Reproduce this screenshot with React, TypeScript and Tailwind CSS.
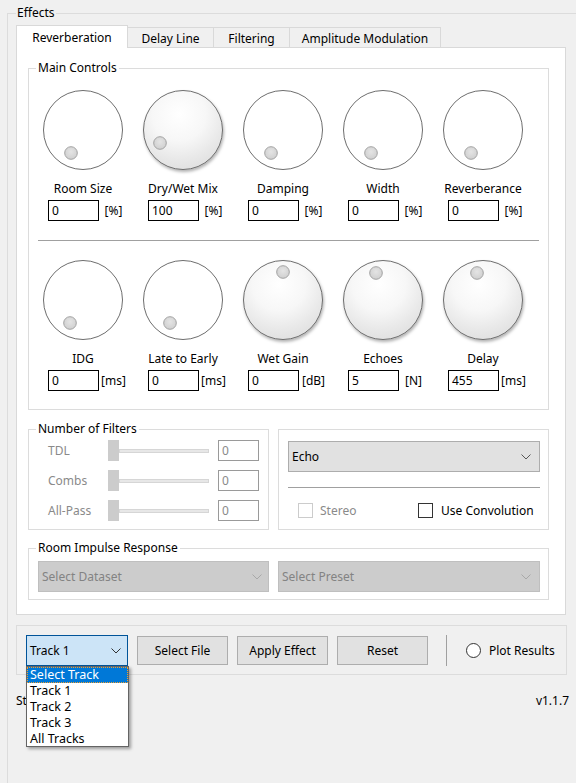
import React from "react";

type KnobProps = { filled?: boolean; dx: number; dy: number };

function Knob({ filled, dx, dy }: KnobProps) {
  return (
    <svg width="80" height="80" viewBox="0 0 80 80" overflow="visible" className="block">
      <defs>
        <radialGradient id="kg" cx="0.45" cy="0.3" r="0.75">
          <stop offset="0" stopColor="#ffffff" />
          <stop offset="0.45" stopColor="#f7f7f7" />
          <stop offset="0.75" stopColor="#e9e9e9" />
          <stop offset="0.92" stopColor="#e2e2e2" />
          <stop offset="1" stopColor="#efefef" />
        </radialGradient>
        <radialGradient id="dg" cx="0.5" cy="0.4" r="0.6">
          <stop offset="0" stopColor="#e4e4e4" />
          <stop offset="1" stopColor="#cfcfcf" />
        </radialGradient>
        <filter id="ks" x="-20%" y="-20%" width="150%" height="150%">
          <feDropShadow dx="1" dy="2" stdDeviation="1.6" floodColor="#000" floodOpacity="0.3" />
        </filter>
      </defs>
      {filled ? (
        <circle cx="40" cy="40" r="39.5" fill="url(#kg)" stroke="#6e6e6e" strokeWidth="1" filter="url(#ks)" />
      ) : (
        <circle cx="40" cy="40" r="39.5" fill="#ffffff" stroke="#6e6e6e" strokeWidth="1" />
      )}
      <circle cx={40 + dx} cy={40 + dy} r="6.3" fill="url(#dg)" stroke="#a3a3a3" strokeWidth="1" />
    </svg>
  );
}

function Chevron({ color = "#000" }: { color?: string }) {
  return (
    <svg width="10" height="6" viewBox="0 0 10 6" className="block">
      <polyline points="0.5,0.5 5,5 9.5,0.5" fill="none" stroke={color} strokeWidth="1" />
    </svg>
  );
}

type KnobCol = { label: string; value: string; unit: string; filled?: boolean; dx: number; dy: number };

function KnobColumn({ k }: { k: KnobCol }) {
  return (
    <div className="flex w-[100px] flex-col items-center">
      <Knob filled={k.filled} dx={k.dx} dy={k.dy} />
      <div className="mt-[11px] h-[16px] leading-[16px] text-black">{k.label}</div>
      <div className="mt-[3px] flex w-full items-center pl-[15px]">
        <div className="h-[21px] w-[51px] border border-black bg-white pl-[3px] pt-[1px] leading-[18px]">{k.value}</div>
        <div className="w-[29px] pt-[1px] text-center leading-[16px]">{k.unit}</div>
      </div>
    </div>
  );
}

function GroupTitle({ children }: { children: React.ReactNode }) {
  return (
    <div className="absolute left-[7px] top-[-9px] bg-inherit px-[2px] leading-[16px] text-black">{children}</div>
  );
}

const row1: KnobCol[] = [
  { label: "Room Size", value: "0", unit: "[%]", dx: -12, dy: 23 },
  { label: "Dry/Wet Mix", value: "100", unit: "[%]", filled: true, dx: -23, dy: 13 },
  { label: "Damping", value: "0", unit: "[%]", dx: -12, dy: 23 },
  { label: "Width", value: "0", unit: "[%]", dx: -12, dy: 23 },
  { label: "Reverberance", value: "0", unit: "[%]", dx: -12, dy: 23 },
];

const row2: KnobCol[] = [
  { label: "IDG", value: "0", unit: "[ms]", dx: -13, dy: 23 },
  { label: "Late to Early", value: "0", unit: "[ms]", dx: -13, dy: 23 },
  { label: "Wet Gain", value: "0", unit: "[dB]", filled: true, dx: 0, dy: -28 },
  { label: "Echoes", value: "5", unit: "[N]", filled: true, dx: -7, dy: -27 },
  { label: "Delay", value: "455", unit: "[ms]", filled: true, dx: -6, dy: -27 },
];

function SliderRow({ label }: { label: string }) {
  return (
    <div className="flex h-[21px] items-center">
      <div className="w-[60px] pt-[1px] leading-[16px] text-[#8a8a8a]">{label}</div>
      <div className="relative h-[21px] w-[101px]">
        <div className="absolute left-[11px] right-0 top-[9px] h-[4px] border border-[#d6d6d6] bg-[#e7e7e7]" />
        <div className="absolute left-0 top-0 h-[21px] w-[11px] bg-[#cccccc]" />
      </div>
      <div className="ml-[9px] h-[21px] w-[41px] border border-[#9a9a9a] bg-white pl-[3px] pt-[1px] leading-[18px] text-[#8a8a8a]">0</div>
    </div>
  );
}

export default function App() {
  return (
    <div className="relative h-[783px] w-[576px] overflow-hidden bg-[#f0f0f0] font-['Noto_Sans',sans-serif] text-[12px] text-black">
      {/* Effects group */}
      <div className="relative ml-[7px] mt-[13px] h-[800px] w-[600px] border-l border-t border-[#dcdcdc] bg-[#f0f0f0] pl-[8px] pt-[11px]">
        <div className="absolute left-[8px] top-[-9px] bg-[#f0f0f0] px-[1px] leading-[16px]">Effects</div>

        {/* Tabs */}
        <div className="flex h-[22px] items-end">
          <div className="relative z-10 mb-[-1px] h-[23px] w-[112px] border-x border-t border-[#d9d9d9] bg-white pt-[4px] text-center leading-[16px]">Reverberation</div>
          <div className="-ml-px h-[20px] w-[87px] border-x border-t border-[#d9d9d9] bg-[#f0f0f0] pt-[3px] text-center leading-[16px]">Delay Line</div>
          <div className="-ml-px h-[20px] w-[77px] border-x border-t border-[#d9d9d9] bg-[#f0f0f0] pt-[3px] text-center leading-[16px]">Filtering</div>
          <div className="-ml-px h-[20px] w-[152px] border-x border-t border-[#d9d9d9] bg-[#f0f0f0] pt-[3px] text-center leading-[16px]">Amplitude Modulation</div>
        </div>

        {/* Tab panel */}
        <div className="h-[568px] w-[550px] border border-[#d9d9d9] bg-white pl-[11px] pt-[20px]">
          {/* Main Controls */}
          <div className="relative w-[521px] border border-[#dcdcdc] bg-white pb-[18px] pl-[4px] pt-[21px]">
            <GroupTitle>Main Controls</GroupTitle>
            <div className="flex">
              {row1.map((k) => (
                <KnobColumn key={k.label} k={k} />
              ))}
            </div>
            <div className="ml-[5px] mt-[19px] h-px w-[501px] bg-[#a0a0a0]" />
            <div className="mt-[19px] flex">
              {row2.map((k) => (
                <KnobColumn key={k.label} k={k} />
              ))}
            </div>
          </div>

          {/* Middle row */}
          <div className="mt-[19px] flex gap-[9px]">
            <div className="relative h-[101px] w-[241px] border border-[#dcdcdc] bg-white pl-[19px] pt-[10px]">
              <GroupTitle>Number of Filters</GroupTitle>
              <div className="flex flex-col gap-[9px]">
                <SliderRow label="TDL" />
                <SliderRow label="Combs" />
                <SliderRow label="All-Pass" />
              </div>
            </div>
            <div className="h-[101px] w-[271px] border border-[#dcdcdc] bg-white pl-[9px] pt-[11px]">
              <div className="flex h-[31px] w-[252px] items-center justify-between border border-[#adadad] bg-[#e1e1e1] pl-[3px] pr-[8px] pt-[1px] leading-[16px]">
                <span>Echo</span>
                <Chevron color="#555" />
              </div>
              <div className="mt-[15px] h-px w-[252px] bg-[#a0a0a0]" />
              <div className="mt-[15px] flex h-[15px] items-center whitespace-nowrap">
                <div className="flex w-[130px] items-center pl-[10px]">
                  <div className="h-[15px] w-[15px] border border-[#cccccc] bg-white" />
                  <span className="ml-[7px] leading-[16px] text-[#8a8a8a]">Stereo</span>
                </div>
                <div className="h-[15px] w-[15px] border border-[#333333] bg-white" />
                <span className="ml-[8px] leading-[16px]">Use Convolution</span>
              </div>
            </div>
          </div>

          {/* Room Impulse Response */}
          <div className="relative mt-[18px] h-[52px] w-[521px] border border-[#dcdcdc] bg-white pl-[9px] pt-[12px]">
            <GroupTitle>Room Impulse Response</GroupTitle>
            <div className="flex gap-[9px]">
              <div className="flex h-[31px] w-[231px] items-center justify-between border border-[#bfbfbf] bg-[#cccccc] pl-[3px] pr-[6px] pt-[1px] leading-[16px] text-[#838383]">
                <span>Select Dataset</span>
                <Chevron color="#a8a8a8" />
              </div>
              <div className="flex h-[31px] w-[262px] items-center justify-between border border-[#bfbfbf] bg-[#cccccc] pl-[3px] pr-[8px] pt-[1px] leading-[16px] text-[#838383]">
                <span>Select Preset</span>
                <Chevron color="#a8a8a8" />
              </div>
            </div>
          </div>
        </div>

        {/* Bottom controls */}
        <div className="mt-[10px] flex h-[50px] w-[551px] items-center border border-[#dcdcdc] bg-[#f0f0f0] pl-[9px]">
          <div className="relative">
            <div className="flex h-[31px] w-[102px] items-center justify-between border border-[#005499] bg-[#cce4f7] pl-[3px] pr-[6px] pt-[2px] leading-[16px]">
              <span>Track 1</span>
              <Chevron color="#333" />
            </div>
            <div className="absolute left-0 top-[31px] z-20 h-[81px] w-[103px] border border-[#646464] bg-white text-[12.5px] shadow-[2px_2px_3px_rgba(0,0,0,0.35)]">
              <div className="h-[16px] border border-dotted border-[#f0a030] bg-[#0078d7] pl-[2px] leading-[14px] text-white">Select Track</div>
              <div className="h-[16px] pl-[3px] leading-[16px]">Track 1</div>
              <div className="h-[16px] pl-[3px] leading-[16px]">Track 2</div>
              <div className="h-[16px] pl-[3px] leading-[16px]">Track 3</div>
              <div className="h-[16px] pl-[3px] leading-[16px]">All Tracks</div>
            </div>
          </div>
          <div className="ml-[9px] flex h-[29px] w-[91px] items-center justify-center border border-[#adadad] bg-[#e1e1e1] pt-[2px]">Select File</div>
          <div className="ml-[9px] flex h-[29px] w-[91px] items-center justify-center border border-[#adadad] bg-[#e1e1e1] pt-[2px]">Apply Effect</div>
          <div className="ml-[9px] flex h-[29px] w-[91px] items-center justify-center border border-[#adadad] bg-[#e1e1e1] pt-[2px]">Reset</div>
          <div className="ml-[18px] h-[31px] w-px bg-[#a0a0a0]" />
          <div className="ml-[19px] h-[15px] w-[15px] rounded-full border border-[#333333] bg-white" />
          <span className="ml-[8px] pt-[2px] leading-[16px]">Plot Results</span>
        </div>

        {/* Status row */}
        <div className="mt-[18px] flex w-[553px] items-center justify-between leading-[16px]">
          <span>St</span>
          <span>v1.1.7</span>
        </div>
      </div>
    </div>
  );
}
